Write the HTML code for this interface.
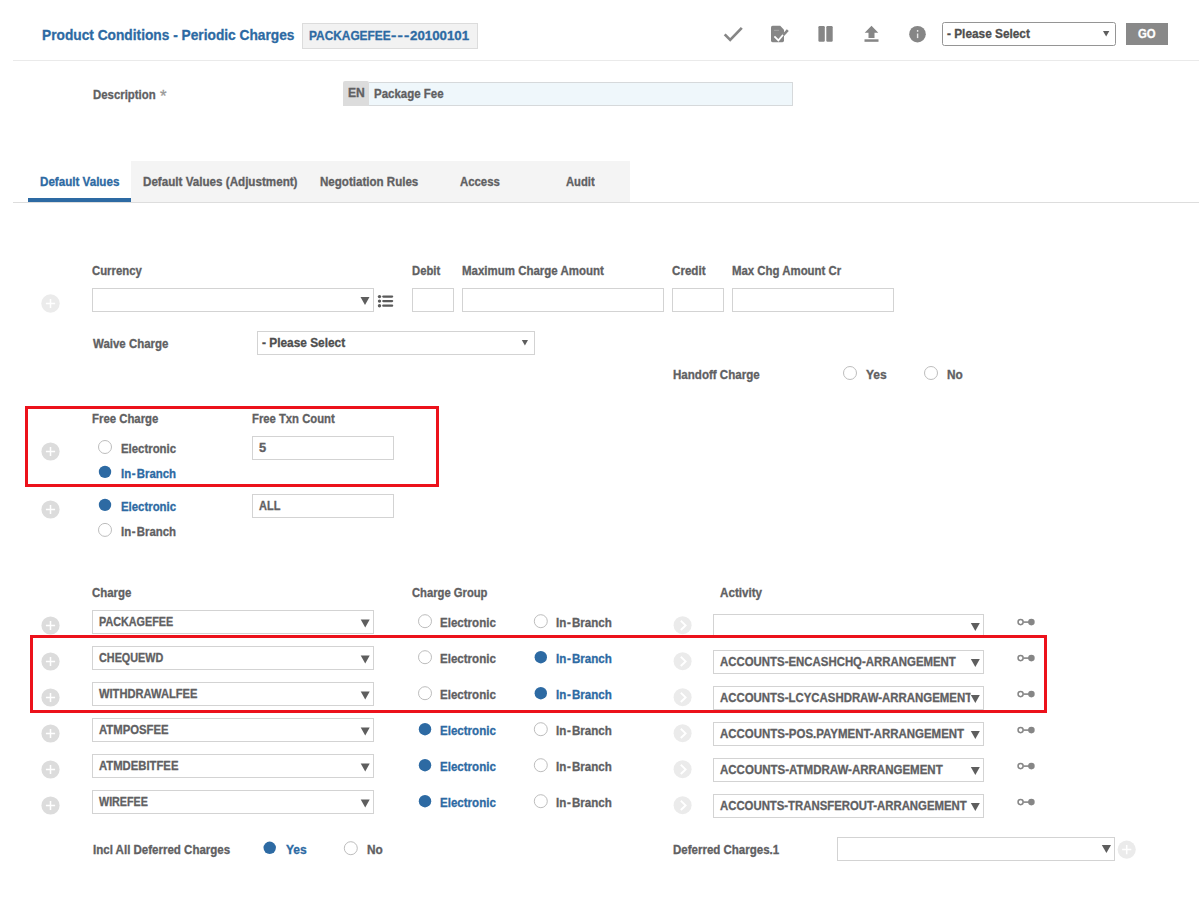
<!DOCTYPE html>
<html lang="en"><head><meta charset="utf-8"><title>Product Conditions - Periodic Charges</title>
<style>
html,body{margin:0;padding:0;background:#fff}
body{width:1199px;height:913px;position:relative;overflow:hidden;font-family:"Liberation Sans",sans-serif}
#pg div{position:absolute}
.t{-webkit-text-stroke:0.3px;position:absolute;white-space:pre;font-size:12px;line-height:14px;color:#606062;font-weight:700;transform-origin:0 0;font-family:"Liberation Sans",sans-serif}
.h{margin:0 1.2px 0 0.7px}
.red{border:3px solid #ec111b;box-sizing:border-box}
svg{position:absolute;left:0;top:0}
</style></head><body><div id="pg">
<div style="left:13px;top:60px;width:1186px;height:1px;background:#eaeaea"></div>
<div style="left:302px;top:23px;width:176px;height:26px;background:#f2f2f2;border:1px solid #dcdcdc;box-sizing:border-box"></div>
<div style="left:942px;top:22px;width:174px;height:24px;background:#fff;border:1px solid #959595;border-radius:2.5px;box-sizing:border-box"></div>
<div style="left:1126px;top:23px;width:42px;height:22px;background:#898989"></div>
<div style="left:343px;top:81px;width:26px;height:25px;background:#dcdcdc;border-radius:2px 2px 0 0"></div>
<div style="left:369px;top:82px;width:424px;height:24px;background:#eff7fb;border:1px solid #d6d9db;border-left:none;box-sizing:border-box"></div>
<div style="left:131px;top:161px;width:499px;height:41px;background:#f4f4f4"></div>
<div style="left:13px;top:202px;width:1186px;height:1px;background:#dddddd"></div>
<div style="left:28px;top:198px;width:103px;height:4px;background:#2d6aa3"></div>
<div style="left:92px;top:288px;width:282px;height:24px;background:#fff;border:1px solid #d3d3d3;box-sizing:border-box"></div>
<div style="left:412px;top:288px;width:42px;height:24px;background:#fff;border:1px solid #d3d3d3;box-sizing:border-box"></div>
<div style="left:462px;top:288px;width:202px;height:24px;background:#fff;border:1px solid #d3d3d3;box-sizing:border-box"></div>
<div style="left:672px;top:288px;width:52px;height:24px;background:#fff;border:1px solid #d3d3d3;box-sizing:border-box"></div>
<div style="left:732px;top:288px;width:162px;height:24px;background:#fff;border:1px solid #d3d3d3;box-sizing:border-box"></div>
<div style="left:257px;top:331px;width:278px;height:24px;background:#fff;border:1px solid #d3d3d3;box-sizing:border-box"></div>
<div style="left:252px;top:436px;width:142px;height:24px;background:#fff;border:1px solid #d3d3d3;box-sizing:border-box"></div>
<div style="left:252px;top:494px;width:142px;height:24px;background:#fff;border:1px solid #d3d3d3;box-sizing:border-box"></div>
<div style="left:92px;top:610px;width:282px;height:24px;background:#fff;border:1px solid #d3d3d3;box-sizing:border-box"></div>
<div style="left:713px;top:614px;width:271px;height:24px;background:#fff;border:1px solid #d3d3d3;box-sizing:border-box"></div>
<div style="left:92px;top:646px;width:282px;height:24px;background:#fff;border:1px solid #d3d3d3;box-sizing:border-box"></div>
<div style="left:713px;top:650px;width:271px;height:24px;background:#fff;border:1px solid #d3d3d3;box-sizing:border-box"></div>
<div style="left:92px;top:682px;width:282px;height:24px;background:#fff;border:1px solid #d3d3d3;box-sizing:border-box"></div>
<div style="left:713px;top:686px;width:271px;height:24px;background:#fff;border:1px solid #d3d3d3;box-sizing:border-box"></div>
<div style="left:92px;top:718px;width:282px;height:24px;background:#fff;border:1px solid #d3d3d3;box-sizing:border-box"></div>
<div style="left:713px;top:722px;width:271px;height:24px;background:#fff;border:1px solid #d3d3d3;box-sizing:border-box"></div>
<div style="left:92px;top:754px;width:282px;height:24px;background:#fff;border:1px solid #d3d3d3;box-sizing:border-box"></div>
<div style="left:713px;top:758px;width:271px;height:24px;background:#fff;border:1px solid #d3d3d3;box-sizing:border-box"></div>
<div style="left:92px;top:790px;width:282px;height:24px;background:#fff;border:1px solid #d3d3d3;box-sizing:border-box"></div>
<div style="left:713px;top:794px;width:271px;height:24px;background:#fff;border:1px solid #d3d3d3;box-sizing:border-box"></div>
<div style="left:837px;top:837px;width:278px;height:24px;background:#fff;border:1px solid #d3d3d3;box-sizing:border-box"></div>
<span class="t" style="left:42px;top:26px;font-size:15px;line-height:17px;color:#2d6aa3;transform:scaleX(0.9152)">Product Conditions - Periodic Charges</span>
<span class="t" style="left:309px;top:29px;font-size:12.5px;line-height:14px;color:#2d6aa3;transform:scaleX(0.9508)">PACKAGEFEE</span>
<span class="t" style="left:391px;top:29px;letter-spacing:0.93px;font-size:12.5px;line-height:14px;color:#2d6aa3;transform:scaleX(1.2800)">---</span>
<span class="t" style="left:410px;top:29px;font-size:12.5px;line-height:14px;color:#2d6aa3;transform:scaleX(1.0637)">20100101</span>
<span class="t" style="left:947px;top:27px;font-size:12.5px;line-height:14px;color:#4e4e4e;transform:scaleX(0.9461)">- Please Select</span>
<span class="t" style="left:1138px;top:27px;font-size:12.5px;line-height:14px;color:#ffffff;transform:scaleX(0.9087)">GO</span>
<span class="t" style="left:93px;top:88px;transform:scaleX(0.9483)">Description</span>
<span class="t" style="left:160px;top:88px;font-weight:400;font-size:16px;line-height:17px;color:#999;transform:scaleX(1.0527)">*</span>
<span class="t" style="left:348px;top:86px;transform:scaleX(1.0086)">EN</span>
<span class="t" style="left:374px;top:87px;transform:scaleX(0.9570)">Package Fee</span>
<span class="t" style="left:40px;top:175px;color:#2d6aa3;transform:scaleX(0.9676)">Default Values</span>
<span class="t" style="left:143px;top:175px;transform:scaleX(0.9694)">Default Values (Adjustment)</span>
<span class="t" style="left:320px;top:175px;transform:scaleX(0.9633)">Negotiation Rules</span>
<span class="t" style="left:460px;top:175px;transform:scaleX(0.9481)">Access</span>
<span class="t" style="left:566px;top:175px;transform:scaleX(0.9341)">Audit</span>
<span class="t" style="left:92px;top:264px;transform:scaleX(0.9445)">Currency</span>
<span class="t" style="left:412px;top:264px;transform:scaleX(0.9379)">Debit</span>
<span class="t" style="left:462px;top:264px;transform:scaleX(0.9568)">Maximum Charge Amount</span>
<span class="t" style="left:672px;top:264px;transform:scaleX(0.9674)">Credit</span>
<span class="t" style="left:732px;top:264px;transform:scaleX(0.9502)">Max Chg Amount Cr</span>
<span class="t" style="left:93px;top:337px;transform:scaleX(0.9553)">Waive Charge</span>
<span class="t" style="left:262px;top:336px;color:#4e4e4e;transform:scaleX(0.9891)">- Please Select</span>
<span class="t" style="left:673px;top:368px;transform:scaleX(0.9633)">Handoff Charge</span>
<span class="t" style="left:866px;top:368px;transform:scaleX(1.0044)">Yes</span>
<span class="t" style="left:947px;top:368px;transform:scaleX(0.9851)">No</span>
<span class="t" style="left:92px;top:412px;transform:scaleX(0.9480)">Free Charge</span>
<span class="t" style="left:252px;top:412px;transform:scaleX(0.9400)">Free Txn Count</span>
<span class="t" style="left:121px;top:442px;transform:scaleX(0.9483)">Electronic</span>
<span class="t" style="left:259px;top:441px;transform:scaleX(1.0703)">5</span>
<span class="t" style="left:121px;top:467px;color:#2d6aa3;transform:scaleX(0.9502)">In<span class="h">-</span>Branch</span>
<span class="t" style="left:121px;top:500px;color:#2d6aa3;transform:scaleX(0.9483)">Electronic</span>
<span class="t" style="left:259px;top:499px;transform:scaleX(0.9147)">ALL</span>
<span class="t" style="left:121px;top:525px;transform:scaleX(0.9502)">In<span class="h">-</span>Branch</span>
<span class="t" style="left:92px;top:586px;transform:scaleX(0.9528)">Charge</span>
<span class="t" style="left:412px;top:586px;transform:scaleX(0.9354)">Charge Group</span>
<span class="t" style="left:720px;top:586px;transform:scaleX(0.9701)">Activity</span>
<span class="t" style="left:99px;top:615px;transform:scaleX(0.9002)">PACKAGEFEE</span>
<span class="t" style="left:440px;top:616px;transform:scaleX(0.9622)">Electronic</span>
<span class="t" style="left:556px;top:616px;transform:scaleX(0.9642)">In<span class="h">-</span>Branch</span>
<span class="t" style="left:99px;top:651px;transform:scaleX(0.9020)">CHEQUEWD</span>
<span class="t" style="left:440px;top:652px;transform:scaleX(0.9622)">Electronic</span>
<span class="t" style="left:556px;top:652px;color:#2d6aa3;transform:scaleX(0.9642)">In<span class="h">-</span>Branch</span>
<span class="t" style="left:720px;top:655px;transform:scaleX(0.9509)">ACCOUNTS-ENCASHCHQ-ARRANGEMENT</span>
<span class="t" style="left:99px;top:687px;transform:scaleX(0.9286)">WITHDRAWALFEE</span>
<span class="t" style="left:440px;top:688px;transform:scaleX(0.9622)">Electronic</span>
<span class="t" style="left:556px;top:688px;color:#2d6aa3;transform:scaleX(0.9642)">In<span class="h">-</span>Branch</span>
<span class="t" style="left:720px;top:691px;transform:scaleX(0.9511)">ACCOUNTS-LCYCASHDRAW-ARRANGEMENT</span>
<span class="t" style="left:99px;top:723px;transform:scaleX(0.9425)">ATMPOSFEE</span>
<span class="t" style="left:440px;top:724px;color:#2d6aa3;transform:scaleX(0.9622)">Electronic</span>
<span class="t" style="left:556px;top:724px;transform:scaleX(0.9642)">In<span class="h">-</span>Branch</span>
<span class="t" style="left:720px;top:727px;transform:scaleX(0.9560)">ACCOUNTS-POS.PAYMENT-ARRANGEMENT</span>
<span class="t" style="left:99px;top:759px;transform:scaleX(0.9407)">ATMDEBITFEE</span>
<span class="t" style="left:440px;top:760px;color:#2d6aa3;transform:scaleX(0.9622)">Electronic</span>
<span class="t" style="left:556px;top:760px;transform:scaleX(0.9642)">In<span class="h">-</span>Branch</span>
<span class="t" style="left:720px;top:763px;transform:scaleX(0.9592)">ACCOUNTS-ATMDRAW-ARRANGEMENT</span>
<span class="t" style="left:99px;top:795px;transform:scaleX(0.8948)">WIREFEE</span>
<span class="t" style="left:440px;top:796px;color:#2d6aa3;transform:scaleX(0.9622)">Electronic</span>
<span class="t" style="left:556px;top:796px;transform:scaleX(0.9642)">In<span class="h">-</span>Branch</span>
<span class="t" style="left:720px;top:799px;transform:scaleX(0.9462)">ACCOUNTS-TRANSFEROUT-ARRANGEMENT</span>
<span class="t" style="left:93px;top:843px;transform:scaleX(0.9597)">Incl All Deferred Charges</span>
<span class="t" style="left:286px;top:843px;color:#2d6aa3;transform:scaleX(1.0044)">Yes</span>
<span class="t" style="left:367px;top:843px;transform:scaleX(0.9851)">No</span>
<span class="t" style="left:673px;top:843px;transform:scaleX(0.9585)">Deferred Charges.1</span>
<svg width="1199" height="913" viewBox="0 0 1199 913">
<path d="M360.5 297h9l-4.5 8z" fill="#5e5e5e"/>
<path d="M521.8 340h6.2l-3.1 5.6z" fill="#5e5e5e"/>
<path d="M1103 31h6.3l-3.15 5.6z" fill="#5e5e5e"/>
<rect x="970.6" y="688" width="12" height="20" fill="#fff"/>
<path d="M360.7 619.4h9l-4.5 8z" fill="#5e5e5e"/>
<path d="M970.8 623h9l-4.5 8z" fill="#5e5e5e"/>
<path d="M360.7 655.4h9l-4.5 8z" fill="#5e5e5e"/>
<path d="M970.8 659h9l-4.5 8z" fill="#5e5e5e"/>
<path d="M360.7 691.4h9l-4.5 8z" fill="#5e5e5e"/>
<path d="M970.8 695h9l-4.5 8z" fill="#5e5e5e"/>
<path d="M360.7 727.4h9l-4.5 8z" fill="#5e5e5e"/>
<path d="M970.8 731h9l-4.5 8z" fill="#5e5e5e"/>
<path d="M360.7 763.4h9l-4.5 8z" fill="#5e5e5e"/>
<path d="M970.8 767h9l-4.5 8z" fill="#5e5e5e"/>
<path d="M360.7 799.4h9l-4.5 8z" fill="#5e5e5e"/>
<path d="M970.8 803h9l-4.5 8z" fill="#5e5e5e"/>
<path d="M1101.8 845h9.2l-4.6 8z" fill="#5e5e5e"/>
<circle cx="50.5" cy="303.5" r="9.2" fill="#ebebeb"/><path d="M45.9 303.5h9.2M50.5 298.9v9.2" stroke="#fff" stroke-width="1.5" fill="none"/>
<circle cx="50.5" cy="451.5" r="9.1" fill="#dcdcdc"/><path d="M45.9 451.5h9.2M50.5 446.9v9.2" stroke="#fff" stroke-width="1.5" fill="none"/>
<circle cx="50.5" cy="509.5" r="9.1" fill="#dcdcdc"/><path d="M45.9 509.5h9.2M50.5 504.9v9.2" stroke="#fff" stroke-width="1.5" fill="none"/>
<circle cx="50.5" cy="625.5" r="9.1" fill="#dcdcdc"/><path d="M45.9 625.5h9.2M50.5 620.9v9.2" stroke="#fff" stroke-width="1.5" fill="none"/>
<circle cx="50.5" cy="661.5" r="9.1" fill="#dcdcdc"/><path d="M45.9 661.5h9.2M50.5 656.9v9.2" stroke="#fff" stroke-width="1.5" fill="none"/>
<circle cx="50.5" cy="697.5" r="9.1" fill="#dcdcdc"/><path d="M45.9 697.5h9.2M50.5 692.9v9.2" stroke="#fff" stroke-width="1.5" fill="none"/>
<circle cx="50.5" cy="733.5" r="9.1" fill="#dcdcdc"/><path d="M45.9 733.5h9.2M50.5 728.9v9.2" stroke="#fff" stroke-width="1.5" fill="none"/>
<circle cx="50.5" cy="769.5" r="9.1" fill="#dcdcdc"/><path d="M45.9 769.5h9.2M50.5 764.9v9.2" stroke="#fff" stroke-width="1.5" fill="none"/>
<circle cx="50.5" cy="805.5" r="9.1" fill="#dcdcdc"/><path d="M45.9 805.5h9.2M50.5 800.9v9.2" stroke="#fff" stroke-width="1.5" fill="none"/>
<circle cx="1126.7" cy="849.6" r="9.1" fill="#ebebeb"/><path d="M1122.1000000000001 849.6h9.2M1126.7 845.0v9.2" stroke="#fff" stroke-width="1.5" fill="none"/>
<circle cx="850" cy="373" r="6.5" fill="#fff" stroke="#bdbdbd" stroke-width="1"/>
<circle cx="931" cy="373" r="6.5" fill="#fff" stroke="#bdbdbd" stroke-width="1"/>
<circle cx="105" cy="447" r="6.5" fill="#fff" stroke="#bdbdbd" stroke-width="1"/>
<circle cx="105" cy="471.9" r="6.2" fill="#2d6aa3"/>
<circle cx="105" cy="504.9" r="6.2" fill="#2d6aa3"/>
<circle cx="105" cy="529.9" r="6.5" fill="#fff" stroke="#bdbdbd" stroke-width="1"/>
<circle cx="425" cy="621.2" r="6.5" fill="#fff" stroke="#bdbdbd" stroke-width="1"/>
<circle cx="540.8" cy="621.2" r="6.5" fill="#fff" stroke="#bdbdbd" stroke-width="1"/>
<circle cx="425" cy="657.2" r="6.5" fill="#fff" stroke="#bdbdbd" stroke-width="1"/>
<circle cx="540.8" cy="657.2" r="6.2" fill="#2d6aa3"/>
<circle cx="425" cy="693.2" r="6.5" fill="#fff" stroke="#bdbdbd" stroke-width="1"/>
<circle cx="540.8" cy="693.2" r="6.2" fill="#2d6aa3"/>
<circle cx="425" cy="729.2" r="6.2" fill="#2d6aa3"/>
<circle cx="540.8" cy="729.2" r="6.5" fill="#fff" stroke="#bdbdbd" stroke-width="1"/>
<circle cx="425" cy="765.2" r="6.2" fill="#2d6aa3"/>
<circle cx="540.8" cy="765.2" r="6.5" fill="#fff" stroke="#bdbdbd" stroke-width="1"/>
<circle cx="425" cy="801.2" r="6.2" fill="#2d6aa3"/>
<circle cx="540.8" cy="801.2" r="6.5" fill="#fff" stroke="#bdbdbd" stroke-width="1"/>
<circle cx="269.7" cy="847.8" r="6.2" fill="#2d6aa3"/>
<circle cx="350.8" cy="848.2" r="6.5" fill="#fff" stroke="#bdbdbd" stroke-width="1"/>
<circle cx="682.6" cy="625.2" r="9" fill="#ebebeb"/><path d="M680.8000000000001 620.8000000000001l4.8 4.6l-4.8 4.6" stroke="#fff" stroke-width="1.9" fill="none"/>
<circle cx="1020.6" cy="622.1" r="2.55" fill="none" stroke="#868686" stroke-width="1.5"/><path d="M1023.4 622.1H1029" stroke="#868686" stroke-width="1.6"/><circle cx="1031.4" cy="622.1" r="3.3" fill="#868686"/>
<circle cx="682.6" cy="661.2" r="9" fill="#ebebeb"/><path d="M680.8000000000001 656.8000000000001l4.8 4.6l-4.8 4.6" stroke="#fff" stroke-width="1.9" fill="none"/>
<circle cx="1020.6" cy="658.1" r="2.55" fill="none" stroke="#868686" stroke-width="1.5"/><path d="M1023.4 658.1H1029" stroke="#868686" stroke-width="1.6"/><circle cx="1031.4" cy="658.1" r="3.3" fill="#868686"/>
<circle cx="682.6" cy="697.2" r="9" fill="#ebebeb"/><path d="M680.8000000000001 692.8000000000001l4.8 4.6l-4.8 4.6" stroke="#fff" stroke-width="1.9" fill="none"/>
<circle cx="1020.6" cy="694.1" r="2.55" fill="none" stroke="#868686" stroke-width="1.5"/><path d="M1023.4 694.1H1029" stroke="#868686" stroke-width="1.6"/><circle cx="1031.4" cy="694.1" r="3.3" fill="#868686"/>
<circle cx="682.6" cy="733.2" r="9" fill="#ebebeb"/><path d="M680.8000000000001 728.8000000000001l4.8 4.6l-4.8 4.6" stroke="#fff" stroke-width="1.9" fill="none"/>
<circle cx="1020.6" cy="730.1" r="2.55" fill="none" stroke="#868686" stroke-width="1.5"/><path d="M1023.4 730.1H1029" stroke="#868686" stroke-width="1.6"/><circle cx="1031.4" cy="730.1" r="3.3" fill="#868686"/>
<circle cx="682.6" cy="769.2" r="9" fill="#ebebeb"/><path d="M680.8000000000001 764.8000000000001l4.8 4.6l-4.8 4.6" stroke="#fff" stroke-width="1.9" fill="none"/>
<circle cx="1020.6" cy="766.1" r="2.55" fill="none" stroke="#868686" stroke-width="1.5"/><path d="M1023.4 766.1H1029" stroke="#868686" stroke-width="1.6"/><circle cx="1031.4" cy="766.1" r="3.3" fill="#868686"/>
<circle cx="682.6" cy="805.2" r="9" fill="#ebebeb"/><path d="M680.8000000000001 800.8000000000001l4.8 4.6l-4.8 4.6" stroke="#fff" stroke-width="1.9" fill="none"/>
<circle cx="1020.6" cy="802.1" r="2.55" fill="none" stroke="#868686" stroke-width="1.5"/><path d="M1023.4 802.1H1029" stroke="#868686" stroke-width="1.6"/><circle cx="1031.4" cy="802.1" r="3.3" fill="#868686"/>
<circle cx="379.5" cy="296.6" r="1.7" fill="#5a5a5a"/><path d="M383.3 296.6H392.1" stroke="#5a5a5a" stroke-width="2.3" stroke-linecap="round"/>
<circle cx="379.5" cy="301.1" r="1.7" fill="#5a5a5a"/><path d="M383.3 301.1H392.1" stroke="#5a5a5a" stroke-width="2.3" stroke-linecap="round"/>
<circle cx="379.5" cy="305.7" r="1.7" fill="#5a5a5a"/><path d="M383.3 305.7H392.1" stroke="#5a5a5a" stroke-width="2.3" stroke-linecap="round"/>
<path d="M724.7 34.4l5.5 5.5l11.6-12" stroke="#868686" stroke-width="2.7" fill="none"/>
<path d="M771 27.4q0-1.6 1.6-1.6h7.6l3.8 4v10.8q0 1.6-1.6 1.6h-9.8q-1.6 0-1.6-1.6z" fill="#868686"/><path d="M774 30.3h5" stroke="#a9a9a9" stroke-width="0.9"/><path d="M774.4 36.4l4 4l5.6-6.6" stroke="#fff" stroke-width="1.7" fill="none"/><path d="M783.2 35.2l4.6-5" stroke="#868686" stroke-width="2.6" fill="none"/>
<rect x="818.4" y="26" width="6.4" height="15.8" rx="1.2" fill="#868686"/><rect x="826.3" y="26" width="6.4" height="15.8" rx="1.2" fill="#868686"/>
<path d="M871.5 25.8l6.8 7h-3.8v5.2h-6v-5.2h-3.8z" fill="#868686"/><rect x="864.5" y="39.3" width="14" height="2.5" fill="#868686"/>
<circle cx="917.5" cy="34.2" r="8.3" fill="#868686"/><rect x="916.9" y="33.5" width="1.4" height="4.6" fill="#e6e6e6"/><rect x="916.9" y="30" width="1.4" height="1.8" fill="#e6e6e6"/>
</svg>
<div class="red" style="left:25px;top:406px;width:414px;height:81px"></div>
<div class="red" style="left:30px;top:635px;width:1017px;height:78px"></div>
</div></body></html>
